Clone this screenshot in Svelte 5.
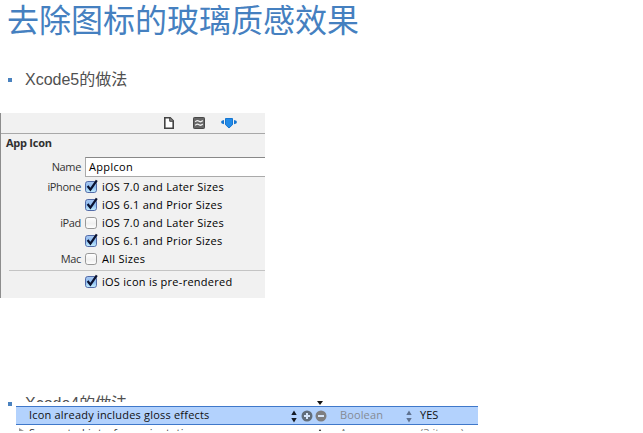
<script>
  const rows = [
    { label: 'iPhone', text: 'iOS 7.0 and Later Sizes', on: true },
    { label: '', text: 'iOS 6.1 and Prior Sizes', on: true },
    { label: 'iPad', text: 'iOS 7.0 and Later Sizes', on: false },
    { label: '', text: 'iOS 6.1 and Prior Sizes', on: true },
    { label: 'Mac', text: 'All Sizes', on: false }
  ];
</script>

{#snippet check(on)}
  <svg class="check" width="15" height="16" viewBox="0 0 15 16">
    <defs>
      <linearGradient id="blue" x2="0" y2="1"><stop stop-color="#a9c8f2" /><stop offset=".5" stop-color="#8dbcf0" /><stop offset="1" stop-color="#c8f1ff" /></linearGradient>
      <linearGradient id="plain" x2="0" y2="1"><stop stop-color="#fff" /><stop offset=".55" stop-color="#f0f0f0" /><stop offset="1" stop-color="#fff" /></linearGradient>
    </defs>
    <rect x="1.5" y="2.5" width="11" height="11" rx="2.3" fill={on ? 'url(#blue)' : 'url(#plain)'} stroke={on ? '#536ba8' : '#989898'} />
    {#if on}<path d="M3.6 7 6.4 10.6 12.8 1.3" fill="none" stroke="#0a1230" stroke-width="2.2" />{/if}
  </svg>
{/snippet}

<main>
  <h1>去除图标的玻璃质感效果</h1>
  <div class="bullet"><i></i><span>Xcode5的做法</span></div>

  <section class="panel">
    <div class="tools">
      <svg width="14" height="14" viewBox="0 0 14 14"><path d="M2.8 1.8h5.4l3 3v7.4H2.8z" fill="#fff" stroke="#444" stroke-width="1.6" /><path d="M7.7 1.8v3.5h3.6" fill="#888" stroke="#444" /></svg>
      <svg width="14" height="14" viewBox="0 0 14 14"><rect x="1.5" y="1.5" width="11" height="11" rx=".8" fill="#666" stroke="#484848" /><path d="M3.2 5.8C5 3.6 6.4 4.7 7.2 5.3S9.5 5.8 10.8 4.5M3.2 9.3C5 7.1 6.4 8.2 7.2 8.8S9.5 9.3 10.8 8" fill="none" stroke="#f0f0f0" stroke-width="1.3" /></svg>
      <svg width="18" height="14" viewBox="0 0 18 14"><path d="M5.5 2.5h7v6.2L9 12 5.5 8.7z" fill="#228be8" stroke="#1676d1" /><path d="M4 4v4.2Q1 7.8 1 6.1T4 4M14 4v4.2Q17 7.8 17 6.1T14 4" fill="#1676d1" /></svg>
    </div>
    <h2>App Icon</h2>
    <div class="row name"><span class="label">Name</span><div class="field">AppIcon</div></div>
    {#each rows as r}
      <div class="row"><span class="label">{r.label}</span>{@render check(r.on)}<span class="text">{r.text}</span></div>
    {/each}
    <hr />
    <div class="row"><span class="label"></span>{@render check(true)}<span class="text">iOS icon is pre-rendered</span></div>
  </section>

  <div class="second"><i></i><span>Xcode4的做法</span></div>
  <section class="plist">
    <div class="prev"><svg width="6" height="5"><path d="M0 0h6L3 4z" fill="#111" /></svg></div>
    <div class="selected">
      <span class="key">Icon already includes gloss effects</span>
      <svg width="6" height="14" viewBox="0 0 6 14"><path d="M.3 6h5.4L3 1.5zM.3 9h5.4L3 13.5z" fill="#151b25" /></svg>
      <svg class="plus" width="12" height="12" viewBox="0 0 12 12"><circle cx="6" cy="6" r="5.5" fill="#626e7b" /><path d="M3 6h6M6 3v6" stroke="#d5e5fa" stroke-width="2" /></svg>
      <svg class="minus" width="12" height="12" viewBox="0 0 12 12"><circle cx="6" cy="6" r="5.5" fill="#7e7e80" /><path d="M3 6h6" stroke="#d5e5fa" stroke-width="2" /></svg>
      <span class="type">Boolean</span>
      <svg width="6" height="14" viewBox="0 0 6 14"><path d="M.3 6h5.4L3 1.5zM.3 9h5.4L3 13.5z" fill="#5f7290" /></svg>
      <span class="value">YES</span>
    </div>
    <div class="next">
      <span class="tri"><svg width="5" height="6"><path d="M0 0v6l5-3z" fill="#999" /></svg></span>
      <span class="nkey">Supported interface orientations</span>
      <svg width="6" height="5"><path d="M0 5h6L3 0z" fill="#333" /></svg>
      <span class="ntype">Array</span><span class="nvalue">(3 items)</span>
    </div>
  </section>
</main>

<style>
  :global(body) { background: #fff; }
  main { width: 643px; height: 433px; overflow: hidden; display: flex; flex-direction: column; font-family: "Open Sans", "Noto Sans", sans-serif; }
  svg { display: block; flex: none; }
  h1 { margin: 0; padding-left: 7px; height: 63px; font: 400 32px/36px "Noto Sans CJK SC", sans-serif; color: #4580c0; white-space: nowrap; }
  i { flex: none; width: 4px; height: 4px; background: #4a82bf; margin: 0 13px 0 8px; }
  .bullet { display: flex; align-items: center; height: 34px; margin-bottom: 16px; font: 16px/34px "Liberation Sans", "Noto Sans CJK SC", sans-serif; color: #505050; }
  .panel { flex: none; box-sizing: border-box; width: 265px; height: 185px; background: #f1f1f1; border-left: 1px solid #8d8d8d; font-size: 11px; color: #000; }
  .tools { height: 21px; box-sizing: border-box; padding: 3px 0 0 161px; display: flex; gap: 16px; border-bottom: 1px solid #a8a8a8; }
  .tools svg:last-child { margin-left: -2px; }
  h2 { margin: 0; padding-left: 5px; height: 23px; font-size: 11px; line-height: 18px; font-weight: 700; color: #303030; letter-spacing: -.25px; }
  .row { display: flex; align-items: center; height: 18px; line-height: 18px; white-space: nowrap; letter-spacing: .27px; }
  .row .text { height: 18px; }
  .label { width: 80px; height: 18px; text-align: right; color: #333; flex: none; margin-right: 3px; letter-spacing: -.35px; }
  .name { height: 20px; margin-bottom: 1px; }
  .field { height: 20px; box-sizing: border-box; flex: 1; margin-left: 1px; border: 1px solid #aaa; border-top-color: #888; border-right: 0; background: #fff; padding-left: 3px; }
  .check { margin-right: 3px; }
  hr { border: 0; height: 1px; background: #c4c4c4; margin: 2px 0 2px 8px; }
  .second { flex: none; display: flex; height: 10px; margin-top: 96px; font: 16px/19px "Liberation Sans", "Noto Sans CJK SC", sans-serif; color: #505050; }
  .second i { margin-top: 8px; }
  .second span { height: 8px; overflow: hidden; }
  .plist { flex: none; margin: -3px 0 0 16px; width: 462px; height: 30px; overflow: hidden; font-size: 11px; color: #111; }
  .prev { height: 5px; padding-left: 301px; }
  .selected { height: 19px; box-sizing: border-box; display: flex; align-items: center; background: #b3d2fd; border-top: 1px solid #3f78ca; border-bottom: 1px solid #3f78ca; line-height: 15px; }
  .selected span { height: 17px; }
  .key { width: 262px; margin-left: 13px; letter-spacing: .2px; }
  .plus { margin-left: 4px; }
  .minus { margin-left: 2px; }
  .type { color: #858b94; margin-left: 13px; width: 66px; letter-spacing: .12px; }
  .value { margin-left: 8px; }
  .next { display: flex; align-items: flex-start; height: 7px; overflow: hidden; color: #333; line-height: 15px; white-space: nowrap; }
  .tri { width: 13px; padding: 3px 0 0 3px; box-sizing: border-box; }
  .nkey { width: 288px; letter-spacing: .2px; }
  .next > svg { margin-top: 4px; }
  .ntype { color: #777; margin-left: 17px; width: 80px; }
  .nvalue { color: #777; }
</style>
